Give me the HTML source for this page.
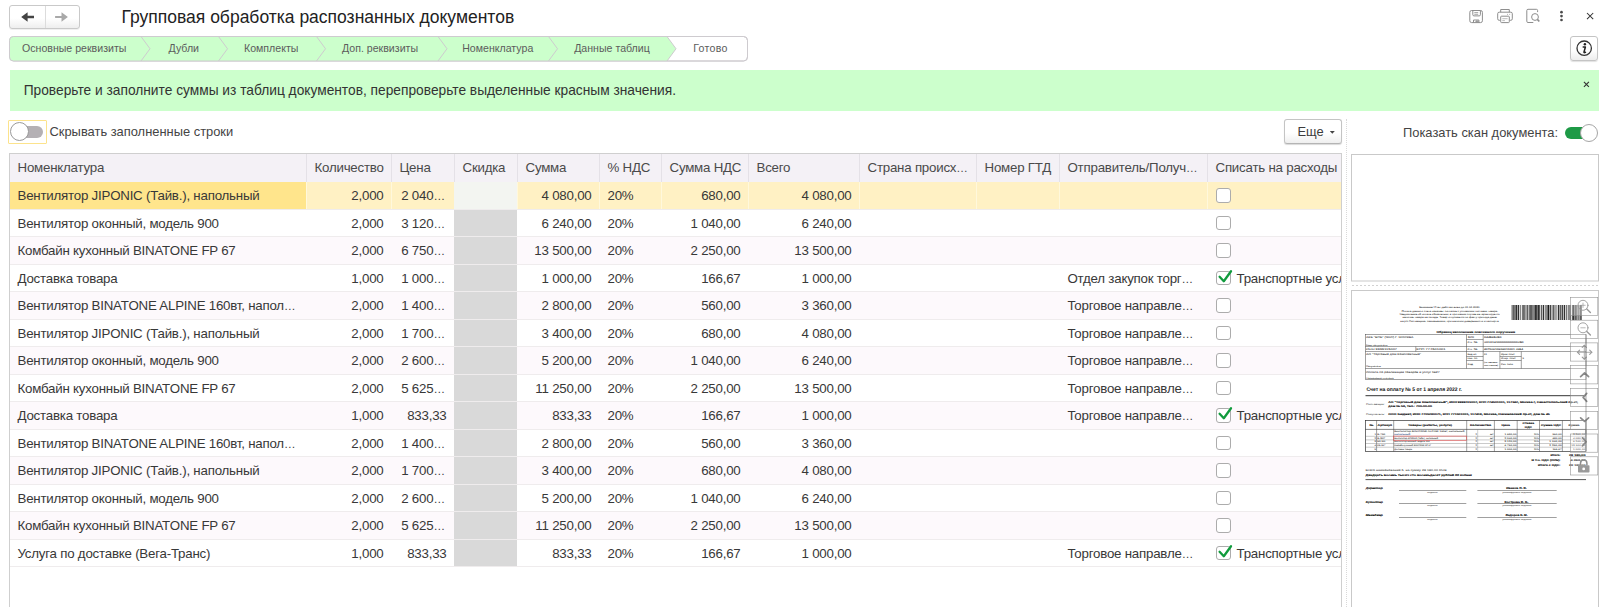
<!DOCTYPE html>
<html><head><meta charset="utf-8">
<style>
html,body{margin:0;padding:0;background:#fff;width:1600px;height:607px;overflow:hidden;position:relative}
body{font-family:"Liberation Sans",sans-serif;color:#333}
.abs{position:absolute}
.t{position:absolute;white-space:nowrap}
.cell{position:absolute;box-sizing:border-box;height:27.5px;line-height:27.5px;padding:0 7.5px 0 8.5px;font-size:13.3px;letter-spacing:-0.22px;white-space:nowrap;overflow:hidden;color:#383838}
.cell.r{text-align:right}
.el{font-size:11.6px;letter-spacing:0}
.cell.hd{color:#4a4a4a}
.bc{font-size:10.6px;line-height:20px;color:#5c5c5c}
.cb{position:absolute;width:14.5px;height:14.5px;box-sizing:border-box;border:1.3px solid #acacac;border-radius:3px;background:#fff}
</style></head><body>
<div class="abs" style="left:9px;top:5px;width:71px;height:23.5px;box-sizing:border-box;border:1px solid #c9c9c9;border-radius:3px;background:linear-gradient(#fff 55%,#eeeeee);box-shadow:0 1px 0 rgba(0,0,0,0.06)"></div>
<div class="abs" style="left:45px;top:6px;width:1px;height:21.5px;background:#dcdcdc"></div>
<svg class="abs" style="left:0;top:0" width="80" height="30" viewBox="0 0 80 30"><path d="M21.2 17 L27.6 12.2 L27.6 15.8 L34 15.8 L34 18.2 L27.6 18.2 L27.6 21.8 Z" fill="#444"/><path d="M67.9 17 L61.5 12.2 L61.5 15.9 L55.1 15.9 L55.1 18.1 L61.5 18.1 L61.5 21.8 Z" fill="#a9a9a9"/></svg>
<div class="t" style="left:121.5px;top:7px;font-size:17.5px;line-height:20px;color:#222">Групповая обработка распознанных документов</div>
<svg class="abs" style="left:1466px;top:6px" width="132" height="22" viewBox="1466 6 132 22">
<g fill="none" stroke="#8e8e8e" stroke-width="1">
<rect x="1469.8" y="10.5" width="12.6" height="12.1" rx="1.8"/>
<path d="M1472.8 10.5 v4.2 q0 1.2 1.2 1.2 h5.2 q1.2 0 1.2-1.2 v-4.2"/>
<path d="M1474.3 12.6 h3.9 M1474.3 14.3 h3.9" stroke-width="0.8"/>
<path d="M1473.5 22.6 v-2.6 h5.4 v2.6"/>
<path d="M1476.5 20.3 v2.2 M1477.7 20.3 v2.2 M1475.2 21.6 h3.5" stroke-width="0.7"/>
</g>
<g fill="none" stroke="#8e8e8e" stroke-width="1">
<path d="M1500.7 12.2 v-2.7 h8.6 v2.7"/>
<path d="M1500.2 20.3 h-1 q-1.5 0-1.5-1.5 v-5.1 q0-1.5 1.5-1.5 h11.6 q1.5 0 1.5 1.5 v5.1 q0 1.5-1.5 1.5 h-1"/>
<rect x="1500.7" y="16.2" width="8.6" height="6.4" rx="0.8"/>
<path d="M1502.3 18.7 h5.3 M1502.3 20.6 h2.6" stroke-width="0.6"/>
<path d="M1507 14.4 h0.8 M1509.3 14.4 h0.8" stroke-width="0.8"/>
</g>
<g fill="none" stroke="#8e8e8e" stroke-width="1">
<path d="M1533.3 22.5 h-5.3 q-1.2 0-1.2-1.2 v-10.8 q0-1.2 1.2-1.2 h8.4 q1.2 0 1.2 1.2 v1.6"/>
<circle cx="1535" cy="17" r="3.4"/>
<path d="M1537.4 19.4 l1.9 2.1" stroke-width="1.6"/>
</g>
<g fill="#4a4a4a"><circle cx="1561.5" cy="12.2" r="1.35"/><circle cx="1561.5" cy="16.1" r="1.35"/><circle cx="1561.5" cy="20" r="1.35"/></g>
<path d="M1587 13 l6.2 6.2 M1593.2 13 l-6.2 6.2" stroke="#333" stroke-width="1.05"/>
</svg>
<svg class="abs" style="left:0;top:0" width="760" height="70" viewBox="0 0 760 70">
<path d="M13.5 36.5 L743.5 36.5 Q747.5 36.5 747.5 40.5 L747.5 57 Q747.5 61 743.5 61 L13.5 61 Q9.5 61 9.5 57 L9.5 40.5 Q9.5 36.5 13.5 36.5 Z" fill="#fff" stroke="#cecbcf" stroke-width="1"/>
<path d="M13.5 36.5 L667 36.5 L676 48.75 L667 61 L13.5 61 Q9.5 61 9.5 57 L9.5 40.5 Q9.5 36.5 13.5 36.5 Z" fill="#ccffcc"/>
<path d="M13.5 36.5 L743.5 36.5 Q747.5 36.5 747.5 40.5 L747.5 57 Q747.5 61 743.5 61 L13.5 61 Q9.5 61 9.5 57 L9.5 40.5 Q9.5 36.5 13.5 36.5 Z" fill="none" stroke="#cecbcf" stroke-width="1"/>
<path d="M141 36.5 L150 48.75 L141 61 M218.5 36.5 L227.5 48.75 L218.5 61 M316.5 36.5 L325.5 48.75 L316.5 61 M438 36.5 L447 48.75 L438 61 M548.5 36.5 L557.5 48.75 L548.5 61 M667 36.5 L676 48.75 L667 61" fill="none" stroke="#cecbcf" stroke-width="1"/>
</svg>
<div class="t bc" style="left:22px;top:38px;">Основные реквизиты</div>
<div class="t bc" style="left:168.5px;top:38px;">Дубли</div>
<div class="t bc" style="left:244px;top:38px;">Комплекты</div>
<div class="t bc" style="left:342px;top:38px;">Доп. реквизиты</div>
<div class="t bc" style="left:462.2px;top:38px;">Номенклатура</div>
<div class="t bc" style="left:574.2px;top:38px;">Данные таблиц</div>
<div class="t bc" style="left:693.3px;top:38px;letter-spacing:0.3px">Готово</div>
<div class="abs" style="left:1570px;top:36px;width:28px;height:24.5px;box-sizing:border-box;border:1px solid #c4c4c4;border-radius:3px;background:linear-gradient(#fff 55%,#ededed);box-shadow:0 1px 1px rgba(0,0,0,0.12)"></div>
<svg class="abs" style="left:1574px;top:38.2px" width="20" height="20" viewBox="0 0 20 20"><circle cx="10.2" cy="10.2" r="7.2" fill="none" stroke="#333" stroke-width="1.3"/><circle cx="10.9" cy="6.3" r="1.2" fill="#222"/><path d="M9.2 9 h2.2 l-1.4 5 q-0.2 0.8 0.6 0.6 l0.9-0.4" fill="none" stroke="#222" stroke-width="1.5" stroke-linecap="round" stroke-linejoin="round"/></svg>
<div class="abs" style="left:9.5px;top:70px;width:1589px;height:41px;background:#ccffcc"></div>
<div class="t" style="left:23.7px;top:70px;font-size:13.76px;line-height:41px;color:#333">Проверьте и заполните суммы из таблиц документов, перепроверьте выделенные красным значения.</div>
<svg class="abs" style="left:1582px;top:80px" width="10" height="10" viewBox="0 0 10 10"><path d="M1.9 1.9 l5 5 M6.9 1.9 l-5 5" stroke="#333" stroke-width="1.1"/></svg>
<div class="abs" style="left:8px;top:120px;width:38.5px;height:23.5px;box-sizing:border-box;border:1px solid #fce38c;border-radius:1px"></div>
<div class="abs" style="left:14px;top:126px;width:29px;height:12px;border-radius:6px;background:#b4b0b4"></div>
<div class="abs" style="left:9.8px;top:122.3px;width:19px;height:19px;box-sizing:border-box;border:1.3px solid #9a9a9a;border-radius:50%;background:#fff"></div>
<div class="t" style="left:49.5px;top:122.3px;font-size:12.9px;line-height:20px;color:#444">Скрывать заполненные строки</div>
<div class="abs" style="left:1284px;top:119.3px;width:57.5px;height:24.4px;box-sizing:border-box;border:1px solid #c4c4c4;border-bottom-color:#b4b4b4;border-radius:3px;background:linear-gradient(#fff 55%,#efefef);box-shadow:0 1px 1px rgba(0,0,0,0.15)"></div>
<div class="t" style="left:1297.5px;top:122.2px;font-size:12.9px;line-height:20px;color:#3c3c3c">Еще</div>
<svg class="abs" style="left:1329.3px;top:130px" width="7" height="5" viewBox="0 0 7 5"><path d="M0.8 1 h5 l-2.5 2.8 z" fill="#444"/></svg>
<div class="abs" style="left:1346px;top:119px;width:0;height:488px;border-left:1px dotted #d9d9d9"></div>
<div class="t" style="left:1403px;top:123.4px;font-size:12.9px;line-height:20px;color:#444">Показать скан документа:</div>
<div class="abs" style="left:1565px;top:126.5px;width:26px;height:12.5px;border-radius:6.25px;background:#1e9a46"></div>
<div class="abs" style="left:1580px;top:123.5px;width:18.3px;height:18.3px;box-sizing:border-box;border:1.3px solid #a5a5a5;border-radius:50%;background:#fff"></div>
<div class="abs" style="left:9px;top:153px;width:1332px;height:29px;background:#f4f1f6;border-top:1px solid #cfcfcf;box-sizing:border-box"></div>
<div class="abs" style="left:306px;top:154px;width:1px;height:28px;background:#e4e1e7"></div>
<div class="abs" style="left:391px;top:154px;width:1px;height:28px;background:#e4e1e7"></div>
<div class="abs" style="left:454px;top:154px;width:1px;height:28px;background:#e4e1e7"></div>
<div class="abs" style="left:517px;top:154px;width:1px;height:28px;background:#e4e1e7"></div>
<div class="abs" style="left:599px;top:154px;width:1px;height:28px;background:#e4e1e7"></div>
<div class="abs" style="left:661px;top:154px;width:1px;height:28px;background:#e4e1e7"></div>
<div class="abs" style="left:748px;top:154px;width:1px;height:28px;background:#e4e1e7"></div>
<div class="abs" style="left:859px;top:154px;width:1px;height:28px;background:#e4e1e7"></div>
<div class="abs" style="left:976px;top:154px;width:1px;height:28px;background:#e4e1e7"></div>
<div class="abs" style="left:1059px;top:154px;width:1px;height:28px;background:#e4e1e7"></div>
<div class="abs" style="left:1207px;top:154px;width:1px;height:28px;background:#e4e1e7"></div>
<div class="cell hd" style="left:9px;top:154px;width:297px;height:28px;line-height:28px">Номенклатура</div>
<div class="cell hd" style="left:306px;top:154px;width:85px;height:28px;line-height:28px">Количество</div>
<div class="cell hd" style="left:391px;top:154px;width:63px;height:28px;line-height:28px">Цена</div>
<div class="cell hd" style="left:454px;top:154px;width:63px;height:28px;line-height:28px">Скидка</div>
<div class="cell hd" style="left:517px;top:154px;width:82px;height:28px;line-height:28px">Сумма</div>
<div class="cell hd" style="left:599px;top:154px;width:62px;height:28px;line-height:28px">% НДС</div>
<div class="cell hd" style="left:661px;top:154px;width:87px;height:28px;line-height:28px">Сумма НДС</div>
<div class="cell hd" style="left:748px;top:154px;width:111px;height:28px;line-height:28px">Всего</div>
<div class="cell hd" style="left:859px;top:154px;width:117px;height:28px;line-height:28px">Страна происх<span class="el">…</span></div>
<div class="cell hd" style="left:976px;top:154px;width:83px;height:28px;line-height:28px">Номер ГТД</div>
<div class="cell hd" style="left:1059px;top:154px;width:148px;height:28px;line-height:28px">Отправитель/Получ<span class="el">…</span></div>
<div class="cell hd" style="left:1207px;top:154px;width:134px;height:28px;line-height:28px">Списать на расходы</div>
<div class="abs" style="left:9px;top:182.0px;width:1332px;height:27.5px;background:#fff1c4"></div>
<div class="abs" style="left:9px;top:182.0px;width:297px;height:27.5px;background:#ffe58c"></div>
<div class="abs" style="left:454px;top:182.0px;width:63px;height:27.5px;background:#f3f5f1"></div>
<div class="abs" style="left:306px;top:182.0px;width:1px;height:27.5px;background:#fff8dc"></div>
<div class="abs" style="left:391px;top:182.0px;width:1px;height:27.5px;background:#fff8dc"></div>
<div class="abs" style="left:517px;top:182.0px;width:1px;height:27.5px;background:#fff8dc"></div>
<div class="abs" style="left:599px;top:182.0px;width:1px;height:27.5px;background:#fff8dc"></div>
<div class="abs" style="left:661px;top:182.0px;width:1px;height:27.5px;background:#fff8dc"></div>
<div class="abs" style="left:748px;top:182.0px;width:1px;height:27.5px;background:#fff8dc"></div>
<div class="abs" style="left:859px;top:182.0px;width:1px;height:27.5px;background:#fff8dc"></div>
<div class="abs" style="left:976px;top:182.0px;width:1px;height:27.5px;background:#fff8dc"></div>
<div class="abs" style="left:1059px;top:182.0px;width:1px;height:27.5px;background:#fff8dc"></div>
<div class="abs" style="left:1207px;top:182.0px;width:1px;height:27.5px;background:#fff8dc"></div>
<div class="abs" style="left:9px;top:208.5px;width:1332px;height:1px;background:#efeced"></div>
<div class="cell" style="left:9px;top:182.0px;width:297px">Вентилятор JIPONIC (Тайв.), напольный</div>
<div class="cell r" style="left:306px;top:182.0px;width:85px">2,000</div>
<div class="cell r" style="left:391px;top:182.0px;width:63px;padding-right:9px">2 040<span class="el">…</span></div>
<div class="cell r" style="left:517px;top:182.0px;width:82px">4 080,00</div>
<div class="cell" style="left:599px;top:182.0px;width:62px">20%</div>
<div class="cell r" style="left:661px;top:182.0px;width:87px">680,00</div>
<div class="cell r" style="left:748px;top:182.0px;width:111px">4 080,00</div>
<div class="cb" style="left:1216px;top:188.4px"></div>
<div class="abs" style="left:9px;top:209.5px;width:1332px;height:27.5px;background:#ffffff"></div>
<div class="abs" style="left:454px;top:209.5px;width:63px;height:27.5px;background:#d9d9d9"></div>
<div class="abs" style="left:9px;top:236.0px;width:1332px;height:1px;background:#efeced"></div>
<div class="cell" style="left:9px;top:209.5px;width:297px">Вентилятор оконный, модель 900</div>
<div class="cell r" style="left:306px;top:209.5px;width:85px">2,000</div>
<div class="cell r" style="left:391px;top:209.5px;width:63px;padding-right:9px">3 120<span class="el">…</span></div>
<div class="cell r" style="left:517px;top:209.5px;width:82px">6 240,00</div>
<div class="cell" style="left:599px;top:209.5px;width:62px">20%</div>
<div class="cell r" style="left:661px;top:209.5px;width:87px">1 040,00</div>
<div class="cell r" style="left:748px;top:209.5px;width:111px">6 240,00</div>
<div class="cb" style="left:1216px;top:215.9px"></div>
<div class="abs" style="left:9px;top:237.0px;width:1332px;height:27.5px;background:#fdf9fc"></div>
<div class="abs" style="left:454px;top:237.0px;width:63px;height:27.5px;background:#d9d9d9"></div>
<div class="abs" style="left:9px;top:263.5px;width:1332px;height:1px;background:#efeced"></div>
<div class="cell" style="left:9px;top:237.0px;width:297px">Комбайн кухонный BINATONE FP 67</div>
<div class="cell r" style="left:306px;top:237.0px;width:85px">2,000</div>
<div class="cell r" style="left:391px;top:237.0px;width:63px;padding-right:9px">6 750<span class="el">…</span></div>
<div class="cell r" style="left:517px;top:237.0px;width:82px">13 500,00</div>
<div class="cell" style="left:599px;top:237.0px;width:62px">20%</div>
<div class="cell r" style="left:661px;top:237.0px;width:87px">2 250,00</div>
<div class="cell r" style="left:748px;top:237.0px;width:111px">13 500,00</div>
<div class="cb" style="left:1216px;top:243.4px"></div>
<div class="abs" style="left:9px;top:264.5px;width:1332px;height:27.5px;background:#ffffff"></div>
<div class="abs" style="left:454px;top:264.5px;width:63px;height:27.5px;background:#d9d9d9"></div>
<div class="abs" style="left:9px;top:291.0px;width:1332px;height:1px;background:#efeced"></div>
<div class="cell" style="left:9px;top:264.5px;width:297px">Доставка товара</div>
<div class="cell r" style="left:306px;top:264.5px;width:85px">1,000</div>
<div class="cell r" style="left:391px;top:264.5px;width:63px;padding-right:9px">1 000<span class="el">…</span></div>
<div class="cell r" style="left:517px;top:264.5px;width:82px">1 000,00</div>
<div class="cell" style="left:599px;top:264.5px;width:62px">20%</div>
<div class="cell r" style="left:661px;top:264.5px;width:87px">166,67</div>
<div class="cell r" style="left:748px;top:264.5px;width:111px">1 000,00</div>
<div class="cell" style="left:1059px;top:264.5px;width:148px">Отдел закупок торг<span class="el">…</span></div>
<div class="cb" style="left:1216px;top:270.9px"></div>
<svg class="abs" style="left:1216px;top:268.9px" width="18" height="18" viewBox="0 0 18 18"><path d="M3.6 7.8 L7.8 12.2 L15 2.3" fill="none" stroke="#119b3d" stroke-width="2.3" stroke-linecap="round" stroke-linejoin="round"/></svg>
<div class="cell" style="left:1228px;top:264.5px;width:113px">Транспортные услуги</div>
<div class="abs" style="left:9px;top:292.0px;width:1332px;height:27.5px;background:#fdf9fc"></div>
<div class="abs" style="left:454px;top:292.0px;width:63px;height:27.5px;background:#d9d9d9"></div>
<div class="abs" style="left:9px;top:318.5px;width:1332px;height:1px;background:#efeced"></div>
<div class="cell" style="left:9px;top:292.0px;width:297px">Вентилятор BINATONE ALPINE 160вт, напол<span class="el">…</span></div>
<div class="cell r" style="left:306px;top:292.0px;width:85px">2,000</div>
<div class="cell r" style="left:391px;top:292.0px;width:63px;padding-right:9px">1 400<span class="el">…</span></div>
<div class="cell r" style="left:517px;top:292.0px;width:82px">2 800,00</div>
<div class="cell" style="left:599px;top:292.0px;width:62px">20%</div>
<div class="cell r" style="left:661px;top:292.0px;width:87px">560,00</div>
<div class="cell r" style="left:748px;top:292.0px;width:111px">3 360,00</div>
<div class="cell" style="left:1059px;top:292.0px;width:148px">Торговое направле<span class="el">…</span></div>
<div class="cb" style="left:1216px;top:298.4px"></div>
<div class="abs" style="left:9px;top:319.5px;width:1332px;height:27.5px;background:#ffffff"></div>
<div class="abs" style="left:454px;top:319.5px;width:63px;height:27.5px;background:#d9d9d9"></div>
<div class="abs" style="left:9px;top:346.0px;width:1332px;height:1px;background:#efeced"></div>
<div class="cell" style="left:9px;top:319.5px;width:297px">Вентилятор JIPONIC (Тайв.), напольный</div>
<div class="cell r" style="left:306px;top:319.5px;width:85px">2,000</div>
<div class="cell r" style="left:391px;top:319.5px;width:63px;padding-right:9px">1 700<span class="el">…</span></div>
<div class="cell r" style="left:517px;top:319.5px;width:82px">3 400,00</div>
<div class="cell" style="left:599px;top:319.5px;width:62px">20%</div>
<div class="cell r" style="left:661px;top:319.5px;width:87px">680,00</div>
<div class="cell r" style="left:748px;top:319.5px;width:111px">4 080,00</div>
<div class="cell" style="left:1059px;top:319.5px;width:148px">Торговое направле<span class="el">…</span></div>
<div class="cb" style="left:1216px;top:325.9px"></div>
<div class="abs" style="left:9px;top:347.0px;width:1332px;height:27.5px;background:#fdf9fc"></div>
<div class="abs" style="left:454px;top:347.0px;width:63px;height:27.5px;background:#d9d9d9"></div>
<div class="abs" style="left:9px;top:373.5px;width:1332px;height:1px;background:#efeced"></div>
<div class="cell" style="left:9px;top:347.0px;width:297px">Вентилятор оконный, модель 900</div>
<div class="cell r" style="left:306px;top:347.0px;width:85px">2,000</div>
<div class="cell r" style="left:391px;top:347.0px;width:63px;padding-right:9px">2 600<span class="el">…</span></div>
<div class="cell r" style="left:517px;top:347.0px;width:82px">5 200,00</div>
<div class="cell" style="left:599px;top:347.0px;width:62px">20%</div>
<div class="cell r" style="left:661px;top:347.0px;width:87px">1 040,00</div>
<div class="cell r" style="left:748px;top:347.0px;width:111px">6 240,00</div>
<div class="cell" style="left:1059px;top:347.0px;width:148px">Торговое направле<span class="el">…</span></div>
<div class="cb" style="left:1216px;top:353.4px"></div>
<div class="abs" style="left:9px;top:374.5px;width:1332px;height:27.5px;background:#ffffff"></div>
<div class="abs" style="left:454px;top:374.5px;width:63px;height:27.5px;background:#d9d9d9"></div>
<div class="abs" style="left:9px;top:401.0px;width:1332px;height:1px;background:#efeced"></div>
<div class="cell" style="left:9px;top:374.5px;width:297px">Комбайн кухонный BINATONE FP 67</div>
<div class="cell r" style="left:306px;top:374.5px;width:85px">2,000</div>
<div class="cell r" style="left:391px;top:374.5px;width:63px;padding-right:9px">5 625<span class="el">…</span></div>
<div class="cell r" style="left:517px;top:374.5px;width:82px">11 250,00</div>
<div class="cell" style="left:599px;top:374.5px;width:62px">20%</div>
<div class="cell r" style="left:661px;top:374.5px;width:87px">2 250,00</div>
<div class="cell r" style="left:748px;top:374.5px;width:111px">13 500,00</div>
<div class="cell" style="left:1059px;top:374.5px;width:148px">Торговое направле<span class="el">…</span></div>
<div class="cb" style="left:1216px;top:380.9px"></div>
<div class="abs" style="left:9px;top:402.0px;width:1332px;height:27.5px;background:#fdf9fc"></div>
<div class="abs" style="left:454px;top:402.0px;width:63px;height:27.5px;background:#d9d9d9"></div>
<div class="abs" style="left:9px;top:428.5px;width:1332px;height:1px;background:#efeced"></div>
<div class="cell" style="left:9px;top:402.0px;width:297px">Доставка товара</div>
<div class="cell r" style="left:306px;top:402.0px;width:85px">1,000</div>
<div class="cell r" style="left:391px;top:402.0px;width:63px;">833,33</div>
<div class="cell r" style="left:517px;top:402.0px;width:82px">833,33</div>
<div class="cell" style="left:599px;top:402.0px;width:62px">20%</div>
<div class="cell r" style="left:661px;top:402.0px;width:87px">166,67</div>
<div class="cell r" style="left:748px;top:402.0px;width:111px">1 000,00</div>
<div class="cell" style="left:1059px;top:402.0px;width:148px">Торговое направле<span class="el">…</span></div>
<div class="cb" style="left:1216px;top:408.4px"></div>
<svg class="abs" style="left:1216px;top:406.4px" width="18" height="18" viewBox="0 0 18 18"><path d="M3.6 7.8 L7.8 12.2 L15 2.3" fill="none" stroke="#119b3d" stroke-width="2.3" stroke-linecap="round" stroke-linejoin="round"/></svg>
<div class="cell" style="left:1228px;top:402.0px;width:113px">Транспортные услуги</div>
<div class="abs" style="left:9px;top:429.5px;width:1332px;height:27.5px;background:#ffffff"></div>
<div class="abs" style="left:454px;top:429.5px;width:63px;height:27.5px;background:#d9d9d9"></div>
<div class="abs" style="left:9px;top:456.0px;width:1332px;height:1px;background:#efeced"></div>
<div class="cell" style="left:9px;top:429.5px;width:297px">Вентилятор BINATONE ALPINE 160вт, напол<span class="el">…</span></div>
<div class="cell r" style="left:306px;top:429.5px;width:85px">2,000</div>
<div class="cell r" style="left:391px;top:429.5px;width:63px;padding-right:9px">1 400<span class="el">…</span></div>
<div class="cell r" style="left:517px;top:429.5px;width:82px">2 800,00</div>
<div class="cell" style="left:599px;top:429.5px;width:62px">20%</div>
<div class="cell r" style="left:661px;top:429.5px;width:87px">560,00</div>
<div class="cell r" style="left:748px;top:429.5px;width:111px">3 360,00</div>
<div class="cb" style="left:1216px;top:435.9px"></div>
<div class="abs" style="left:9px;top:457.0px;width:1332px;height:27.5px;background:#fdf9fc"></div>
<div class="abs" style="left:454px;top:457.0px;width:63px;height:27.5px;background:#d9d9d9"></div>
<div class="abs" style="left:9px;top:483.5px;width:1332px;height:1px;background:#efeced"></div>
<div class="cell" style="left:9px;top:457.0px;width:297px">Вентилятор JIPONIC (Тайв.), напольный</div>
<div class="cell r" style="left:306px;top:457.0px;width:85px">2,000</div>
<div class="cell r" style="left:391px;top:457.0px;width:63px;padding-right:9px">1 700<span class="el">…</span></div>
<div class="cell r" style="left:517px;top:457.0px;width:82px">3 400,00</div>
<div class="cell" style="left:599px;top:457.0px;width:62px">20%</div>
<div class="cell r" style="left:661px;top:457.0px;width:87px">680,00</div>
<div class="cell r" style="left:748px;top:457.0px;width:111px">4 080,00</div>
<div class="cb" style="left:1216px;top:463.4px"></div>
<div class="abs" style="left:9px;top:484.5px;width:1332px;height:27.5px;background:#ffffff"></div>
<div class="abs" style="left:454px;top:484.5px;width:63px;height:27.5px;background:#d9d9d9"></div>
<div class="abs" style="left:9px;top:511.0px;width:1332px;height:1px;background:#efeced"></div>
<div class="cell" style="left:9px;top:484.5px;width:297px">Вентилятор оконный, модель 900</div>
<div class="cell r" style="left:306px;top:484.5px;width:85px">2,000</div>
<div class="cell r" style="left:391px;top:484.5px;width:63px;padding-right:9px">2 600<span class="el">…</span></div>
<div class="cell r" style="left:517px;top:484.5px;width:82px">5 200,00</div>
<div class="cell" style="left:599px;top:484.5px;width:62px">20%</div>
<div class="cell r" style="left:661px;top:484.5px;width:87px">1 040,00</div>
<div class="cell r" style="left:748px;top:484.5px;width:111px">6 240,00</div>
<div class="cb" style="left:1216px;top:490.9px"></div>
<div class="abs" style="left:9px;top:512.0px;width:1332px;height:27.5px;background:#fdf9fc"></div>
<div class="abs" style="left:454px;top:512.0px;width:63px;height:27.5px;background:#d9d9d9"></div>
<div class="abs" style="left:9px;top:538.5px;width:1332px;height:1px;background:#efeced"></div>
<div class="cell" style="left:9px;top:512.0px;width:297px">Комбайн кухонный BINATONE FP 67</div>
<div class="cell r" style="left:306px;top:512.0px;width:85px">2,000</div>
<div class="cell r" style="left:391px;top:512.0px;width:63px;padding-right:9px">5 625<span class="el">…</span></div>
<div class="cell r" style="left:517px;top:512.0px;width:82px">11 250,00</div>
<div class="cell" style="left:599px;top:512.0px;width:62px">20%</div>
<div class="cell r" style="left:661px;top:512.0px;width:87px">2 250,00</div>
<div class="cell r" style="left:748px;top:512.0px;width:111px">13 500,00</div>
<div class="cb" style="left:1216px;top:518.4px"></div>
<div class="abs" style="left:9px;top:539.5px;width:1332px;height:27.5px;background:#ffffff"></div>
<div class="abs" style="left:454px;top:539.5px;width:63px;height:27.5px;background:#d9d9d9"></div>
<div class="abs" style="left:9px;top:566.0px;width:1332px;height:1px;background:#efeced"></div>
<div class="cell" style="left:9px;top:539.5px;width:297px">Услуга по доставке (Вега-Транс)</div>
<div class="cell r" style="left:306px;top:539.5px;width:85px">1,000</div>
<div class="cell r" style="left:391px;top:539.5px;width:63px;">833,33</div>
<div class="cell r" style="left:517px;top:539.5px;width:82px">833,33</div>
<div class="cell" style="left:599px;top:539.5px;width:62px">20%</div>
<div class="cell r" style="left:661px;top:539.5px;width:87px">166,67</div>
<div class="cell r" style="left:748px;top:539.5px;width:111px">1 000,00</div>
<div class="cell" style="left:1059px;top:539.5px;width:148px">Торговое направле<span class="el">…</span></div>
<div class="cb" style="left:1216px;top:545.9px"></div>
<svg class="abs" style="left:1216px;top:543.9px" width="18" height="18" viewBox="0 0 18 18"><path d="M3.6 7.8 L7.8 12.2 L15 2.3" fill="none" stroke="#119b3d" stroke-width="2.3" stroke-linecap="round" stroke-linejoin="round"/></svg>
<div class="cell" style="left:1228px;top:539.5px;width:113px">Транспортные услуги</div>
<div class="abs" style="left:9px;top:153px;width:1px;height:454px;background:#cfcfcf"></div>
<div class="abs" style="left:1341px;top:153px;width:1px;height:454px;background:#cfcfcf"></div>
<svg class="abs" style="left:1340px;top:140px" width="260" height="467" viewBox="1340 140 260 467" font-family="Liberation Sans" fill="#333" text-rendering="geometricPrecision">
<rect x="1351.5" y="154.5" width="247" height="126.5" fill="#fff" stroke="#c9c9c9" stroke-width="1"/>
<path d="M1352 285.5 H1598" stroke="#d2d2d2" stroke-width="1" stroke-dasharray="2 2"/>
<rect x="1351.5" y="290.5" width="247" height="330" fill="#fff" stroke="#c9c9c9" stroke-width="1"/>
<text x="1419.2" y="308.40" font-size="2.5" textLength="61" lengthAdjust="spacingAndGlyphs" stroke="#333" stroke-width="0.04">Внимание! Счет действителен до 01.04.2020.</text>
<text x="1401.5" y="311.60" font-size="2.5" textLength="96.5" lengthAdjust="spacingAndGlyphs" stroke="#333" stroke-width="0.04">Оплата данного счета означает согласие с условиями поставки товара.</text>
<text x="1399.5" y="315.00" font-size="2.5" textLength="100" lengthAdjust="spacingAndGlyphs" stroke="#333" stroke-width="0.04">Уведомление об оплате обязательно, в противном случае не гарантируется</text>
<text x="1402.4" y="318.30" font-size="2.5" textLength="95" lengthAdjust="spacingAndGlyphs" stroke="#333" stroke-width="0.04">наличие товара на складе. Товар отпускается по факту прихода денег</text>
<text x="1400.3" y="321.80" font-size="2.5" textLength="99" lengthAdjust="spacingAndGlyphs" stroke="#333" stroke-width="0.04">на р/с Поставщика, самовывозом, при наличии доверенности и паспорта.</text>
<rect x="1511.70" y="305" width="0.7" height="15" fill="#1a1a1a"/><rect x="1512.80" y="305" width="0.9" height="15" fill="#1a1a1a"/><rect x="1514.00" y="305" width="0.4" height="15" fill="#1a1a1a"/><rect x="1514.70" y="305" width="0.7" height="15" fill="#1a1a1a"/><rect x="1515.70" y="305" width="1.2" height="15" fill="#1a1a1a"/><rect x="1517.30" y="305" width="0.4" height="15" fill="#1a1a1a"/><rect x="1518.00" y="305" width="0.9" height="15" fill="#1a1a1a"/><rect x="1519.80" y="305" width="0.4" height="15" fill="#1a1a1a"/><rect x="1520.60" y="305" width="0.4" height="15" fill="#1a1a1a"/><rect x="1521.90" y="305" width="0.4" height="15" fill="#1a1a1a"/><rect x="1522.60" y="305" width="0.5" height="15" fill="#1a1a1a"/><rect x="1523.40" y="305" width="1.2" height="15" fill="#1a1a1a"/><rect x="1525.50" y="305" width="0.4" height="15" fill="#1a1a1a"/><rect x="1526.30" y="305" width="0.4" height="15" fill="#1a1a1a"/><rect x="1527.10" y="305" width="0.7" height="15" fill="#1a1a1a"/><rect x="1528.70" y="305" width="0.5" height="15" fill="#1a1a1a"/><rect x="1529.50" y="305" width="1.2" height="15" fill="#1a1a1a"/><rect x="1531.30" y="305" width="1.2" height="15" fill="#1a1a1a"/><rect x="1532.90" y="305" width="0.4" height="15" fill="#1a1a1a"/><rect x="1533.70" y="305" width="0.7" height="15" fill="#1a1a1a"/><rect x="1534.70" y="305" width="1.2" height="15" fill="#1a1a1a"/><rect x="1536.20" y="305" width="1.2" height="15" fill="#1a1a1a"/><rect x="1537.70" y="305" width="1.2" height="15" fill="#1a1a1a"/><rect x="1539.30" y="305" width="0.9" height="15" fill="#1a1a1a"/><rect x="1541.10" y="305" width="0.7" height="15" fill="#1a1a1a"/><rect x="1542.70" y="305" width="1.2" height="15" fill="#1a1a1a"/><rect x="1544.80" y="305" width="0.7" height="15" fill="#1a1a1a"/><rect x="1546.10" y="305" width="0.5" height="15" fill="#1a1a1a"/><rect x="1547.00" y="305" width="0.5" height="15" fill="#1a1a1a"/><rect x="1547.80" y="305" width="1.2" height="15" fill="#1a1a1a"/><rect x="1549.60" y="305" width="1.2" height="15" fill="#1a1a1a"/><rect x="1551.70" y="305" width="0.7" height="15" fill="#1a1a1a"/><rect x="1553.30" y="305" width="0.7" height="15" fill="#1a1a1a"/><rect x="1554.30" y="305" width="0.4" height="15" fill="#1a1a1a"/><rect x="1555.60" y="305" width="0.5" height="15" fill="#1a1a1a"/><rect x="1556.70" y="305" width="0.5" height="15" fill="#1a1a1a"/><rect x="1558.10" y="305" width="0.9" height="15" fill="#1a1a1a"/><rect x="1559.30" y="305" width="0.4" height="15" fill="#1a1a1a"/><rect x="1560.30" y="305" width="0.7" height="15" fill="#1a1a1a"/><rect x="1561.60" y="305" width="1.2" height="15" fill="#1a1a1a"/><rect x="1563.70" y="305" width="1.2" height="15" fill="#1a1a1a"/><rect x="1565.80" y="305" width="0.4" height="15" fill="#1a1a1a"/><rect x="1566.50" y="305" width="0.7" height="15" fill="#1a1a1a"/><rect x="1568.10" y="305" width="0.4" height="15" fill="#1a1a1a"/><rect x="1568.80" y="305" width="0.7" height="15" fill="#1a1a1a"/><rect x="1570.40" y="305" width="0.7" height="15" fill="#1a1a1a"/><rect x="1572.00" y="305" width="0.7" height="15" fill="#1a1a1a"/><rect x="1573.00" y="305" width="0.9" height="15" fill="#1a1a1a"/><rect x="1574.50" y="305" width="0.5" height="15" fill="#1a1a1a"/><rect x="1575.30" y="305" width="0.9" height="15" fill="#1a1a1a"/><rect x="1576.50" y="305" width="0.5" height="15" fill="#1a1a1a"/><rect x="1577.60" y="305" width="0.5" height="15" fill="#1a1a1a"/><rect x="1578.50" y="305" width="0.9" height="15" fill="#1a1a1a"/><rect x="1580.30" y="305" width="0.9" height="15" fill="#1a1a1a"/><rect x="1581.50" y="305" width="0.5" height="15" fill="#1a1a1a"/>
<text x="1436.5" y="333.24" font-size="2.9" textLength="78.5" lengthAdjust="spacingAndGlyphs" font-weight="bold" fill="#111" stroke="#111" stroke-width="0.12">Образец заполнения платежного поручения</text>
<rect x="1365.5" y="334.5" width="220.5" height="45" fill="none" stroke="#444" stroke-width="0.5"/>
<path d="M1365.35 346.5 L1585.95 346.5" stroke="#444" stroke-width="0.5"/>
<path d="M1365.35 351.5 L1585.95 351.5" stroke="#444" stroke-width="0.5"/>
<path d="M1365.35 368.5 L1585.95 368.5" stroke="#444" stroke-width="0.5"/>
<path d="M1466.5 334.45 L1466.5 368.5" stroke="#444" stroke-width="0.5"/>
<path d="M1483.2 334.45 L1483.2 368.5" stroke="#444" stroke-width="0.5"/>
<path d="M1499.9 351.5 L1499.9 368.5" stroke="#444" stroke-width="0.5"/>
<path d="M1521.3 351.5 L1521.3 368.5" stroke="#444" stroke-width="0.5"/>
<path d="M1415.8 346.5 L1415.8 351.5" stroke="#444" stroke-width="0.5"/>
<path d="M1466.5 339.5 L1483.2 339.5" stroke="#444" stroke-width="0.5"/>
<path d="M1466.5 356.5 L1483.2 356.5" stroke="#444" stroke-width="0.5"/>
<path d="M1466.5 360.5 L1483.2 360.5" stroke="#444" stroke-width="0.5"/>
<path d="M1499.9 356.5 L1521.3 356.5" stroke="#444" stroke-width="0.5"/>
<path d="M1499.9 360.5 L1521.3 360.5" stroke="#444" stroke-width="0.5"/>
<text x="1366" y="337.74" font-size="2.6" textLength="47.5" lengthAdjust="spacingAndGlyphs" stroke="#333" stroke-width="0.04">АКБ "ВПБ" (ЗАО) Г. МОСКВА</text>
<text x="1366" y="345.76" font-size="2.1" textLength="21.5" lengthAdjust="spacingAndGlyphs" stroke="#333" stroke-width="0.04">Банк получателя</text>
<text x="1366" y="349.94" font-size="2.6" textLength="31" lengthAdjust="spacingAndGlyphs" stroke="#333" stroke-width="0.04">ИНН    9999115007</text>
<text x="1416.3" y="349.94" font-size="2.6" textLength="29.3" lengthAdjust="spacingAndGlyphs" stroke="#333" stroke-width="0.04">КПП    774501001</text>
<text x="1366" y="355.04" font-size="2.6" textLength="55" lengthAdjust="spacingAndGlyphs" stroke="#333" stroke-width="0.04">АО "Торговый дом Комплексный"</text>
<text x="1366" y="367.06" font-size="2.1" textLength="15" lengthAdjust="spacingAndGlyphs" stroke="#333" stroke-width="0.04">Получатель</text>
<text x="1366" y="373.04" font-size="2.6" textLength="73.8" lengthAdjust="spacingAndGlyphs" stroke="#333" stroke-width="0.04">Оплата по реализации товаров и услуг №27</text>
<text x="1366" y="378.56" font-size="2.1" textLength="27.6" lengthAdjust="spacingAndGlyphs" stroke="#333" stroke-width="0.04">Назначение платежа</text>
<text x="1468" y="337.66" font-size="2.4" textLength="6" lengthAdjust="spacingAndGlyphs" stroke="#333" stroke-width="0.04">БИК</text>
<text x="1484" y="337.66" font-size="2.4" textLength="17.5" lengthAdjust="spacingAndGlyphs" stroke="#333" stroke-width="0.04">044585250</text>
<text x="1467.5" y="342.66" font-size="2.4" textLength="10" lengthAdjust="spacingAndGlyphs" stroke="#333" stroke-width="0.04">Сч. №</text>
<text x="1484" y="342.66" font-size="2.4" textLength="39.6" lengthAdjust="spacingAndGlyphs" stroke="#333" stroke-width="0.04">30101810000000000250</text>
<text x="1467.5" y="349.86" font-size="2.4" textLength="10" lengthAdjust="spacingAndGlyphs" stroke="#333" stroke-width="0.04">Сч. №</text>
<text x="1484" y="349.86" font-size="2.4" textLength="39" lengthAdjust="spacingAndGlyphs" stroke="#333" stroke-width="0.04">40702810808011001 3654</text>
<text x="1467.5" y="354.79" font-size="2.2" textLength="9.5" lengthAdjust="spacingAndGlyphs" stroke="#333" stroke-width="0.04">Вид оп.</text>
<text x="1484" y="354.79" font-size="2.2" textLength="3" lengthAdjust="spacingAndGlyphs" stroke="#333" stroke-width="0.04">01</text>
<text x="1501" y="354.79" font-size="2.2" textLength="14" lengthAdjust="spacingAndGlyphs" stroke="#333" stroke-width="0.04">Срок плат.</text>
<text x="1467.5" y="359.29" font-size="2.2" textLength="10.5" lengthAdjust="spacingAndGlyphs" stroke="#333" stroke-width="0.04">Наз. пл.</text>
<text x="1501" y="359.29" font-size="2.2" textLength="15" lengthAdjust="spacingAndGlyphs" stroke="#333" stroke-width="0.04">Очер. плат.</text>
<text x="1522.5" y="359.29" font-size="2.2" textLength="1.5" lengthAdjust="spacingAndGlyphs" stroke="#333" stroke-width="0.04">5</text>
<text x="1467.5" y="365.49" font-size="2.2" textLength="5.5" lengthAdjust="spacingAndGlyphs" stroke="#333" stroke-width="0.04">Код</text>
<text x="1484" y="363.22" font-size="2.0" textLength="14" lengthAdjust="spacingAndGlyphs" stroke="#333" stroke-width="0.04">(по назначе-</text>
<text x="1484" y="366.22" font-size="2.0" textLength="14" lengthAdjust="spacingAndGlyphs" stroke="#333" stroke-width="0.04">нию платежа)</text>
<text x="1501" y="365.49" font-size="2.2" textLength="12" lengthAdjust="spacingAndGlyphs" stroke="#333" stroke-width="0.04">Рез. поле</text>
<text x="1366.5" y="391.47" font-size="5.2" textLength="95.4" lengthAdjust="spacingAndGlyphs" font-weight="bold" fill="#111">Счет на оплату № 5 от 1 апреля 2022 г.</text>
<path d="M1365.5 395.7 L1586 395.7" stroke="#333" stroke-width="1.0"/>
<text x="1366" y="404.50" font-size="2.5" textLength="18.6" lengthAdjust="spacingAndGlyphs" fill="#555" stroke="#555" stroke-width="0.04">Поставщик:</text>
<text x="1388.3" y="402.94" font-size="2.6" textLength="189.6" lengthAdjust="spacingAndGlyphs" font-weight="bold" fill="#111" stroke="#111" stroke-width="0.12">АО "Торговый дом Комплексный", ИНН 9999115007, КПП 774501001, 117342, Москва г, Севастопольский пр-кт,</text>
<text x="1388.3" y="406.84" font-size="2.6" textLength="43.7" lengthAdjust="spacingAndGlyphs" font-weight="bold" fill="#111" stroke="#111" stroke-width="0.12">дом № 56, тел.: 700-00-00</text>
<text x="1366" y="414.90" font-size="2.5" textLength="19" lengthAdjust="spacingAndGlyphs" fill="#555" stroke="#555" stroke-width="0.04">Покупатель:</text>
<text x="1388.3" y="414.94" font-size="2.6" textLength="161.5" lengthAdjust="spacingAndGlyphs" font-weight="bold" fill="#111" stroke="#111" stroke-width="0.12">ООО Бюджет, ИНН 7705260071, КПП 771501001, 117418, Москва, Нахимовский пр-кт, дом № 45</text>
<rect x="1365.35" y="420.4" width="220.6" height="31" fill="none" stroke="#333" stroke-width="0.7"/>
<path d="M1365.35 429.4 L1585.95 429.4" stroke="#333" stroke-width="0.6"/>
<path d="M1376.6 420.4 L1376.6 451.4" stroke="#444" stroke-width="0.5"/>
<path d="M1393.7 420.4 L1393.7 451.4" stroke="#444" stroke-width="0.5"/>
<path d="M1466.7 420.4 L1466.7 451.4" stroke="#444" stroke-width="0.5"/>
<path d="M1494.4 420.4 L1494.4 451.4" stroke="#444" stroke-width="0.5"/>
<path d="M1517.2 420.4 L1517.2 451.4" stroke="#444" stroke-width="0.5"/>
<path d="M1539.5 420.4 L1539.5 451.4" stroke="#444" stroke-width="0.5"/>
<path d="M1562.4 420.4 L1562.4 451.4" stroke="#444" stroke-width="0.5"/>
<path d="M1365.35 436.3 L1585.95 436.3" stroke="#666" stroke-width="0.35"/>
<path d="M1365.35 439.9 L1585.95 439.9" stroke="#666" stroke-width="0.35"/>
<path d="M1365.35 443.5 L1585.95 443.5" stroke="#666" stroke-width="0.35"/>
<path d="M1365.35 447.2 L1585.95 447.2" stroke="#666" stroke-width="0.35"/>
<path d="M1477.7 429.4 L1477.7 451.4" stroke="#777" stroke-width="0.35"/>
<text x="1371.5" y="425.50" font-size="2.5" textLength="4" lengthAdjust="spacingAndGlyphs" font-weight="bold" text-anchor="middle" fill="#111" stroke="#111" stroke-width="0.12">№</text>
<text x="1377.6" y="425.50" font-size="2.5" textLength="14.5" lengthAdjust="spacingAndGlyphs" font-weight="bold" fill="#111" stroke="#111" stroke-width="0.12">Артикул</text>
<text x="1430" y="425.50" font-size="2.5" textLength="44" lengthAdjust="spacingAndGlyphs" font-weight="bold" text-anchor="middle" fill="#111" stroke="#111" stroke-width="0.12">Товары (работы, услуги)</text>
<text x="1480.6" y="425.50" font-size="2.5" textLength="21" lengthAdjust="spacingAndGlyphs" font-weight="bold" text-anchor="middle" fill="#111" stroke="#111" stroke-width="0.12">Количество</text>
<text x="1505.8" y="425.50" font-size="2.5" textLength="8.5" lengthAdjust="spacingAndGlyphs" font-weight="bold" text-anchor="middle" fill="#111" stroke="#111" stroke-width="0.12">Цена</text>
<text x="1528.3" y="423.50" font-size="2.5" textLength="11.5" lengthAdjust="spacingAndGlyphs" font-weight="bold" text-anchor="middle" fill="#111" stroke="#111" stroke-width="0.12">Ставка</text>
<text x="1528.3" y="427.70" font-size="2.5" textLength="7" lengthAdjust="spacingAndGlyphs" font-weight="bold" text-anchor="middle" fill="#111" stroke="#111" stroke-width="0.12">НДС</text>
<text x="1551" y="425.50" font-size="2.5" textLength="20" lengthAdjust="spacingAndGlyphs" font-weight="bold" text-anchor="middle" fill="#111" stroke="#111" stroke-width="0.12">Сумма НДС</text>
<text x="1574" y="425.50" font-size="2.5" textLength="11" lengthAdjust="spacingAndGlyphs" font-weight="bold" text-anchor="middle" fill="#111" stroke="#111" stroke-width="0.12">Сумма</text>
<text x="1376" y="435.09" font-size="2.2" textLength="1.5" lengthAdjust="spacingAndGlyphs" text-anchor="end" stroke="#333" stroke-width="0.04">1</text>
<text x="1377.3" y="435.09" font-size="2.2" textLength="8" lengthAdjust="spacingAndGlyphs" stroke="#333" stroke-width="0.04">В-750</text>
<text x="1394.3" y="431.79" font-size="2.2" textLength="71" lengthAdjust="spacingAndGlyphs" stroke="#333" stroke-width="0.04">Вентилятор BINATONE ALPINE 160вт, напольный,</text>
<text x="1394.3" y="435.09" font-size="2.2" textLength="16" lengthAdjust="spacingAndGlyphs" fill="#2a4f8a" stroke="#2a4f8a" stroke-width="0.04">напольный</text>
<text x="1477" y="435.09" font-size="2.2" textLength="1.4" lengthAdjust="spacingAndGlyphs" text-anchor="end" stroke="#333" stroke-width="0.04">2</text>
<text x="1493.5" y="435.09" font-size="2.2" textLength="3.5" lengthAdjust="spacingAndGlyphs" text-anchor="end" stroke="#333" stroke-width="0.04">шт</text>
<text x="1516.5" y="435.09" font-size="2.2" textLength="12" lengthAdjust="spacingAndGlyphs" text-anchor="end" stroke="#333" stroke-width="0.04">1 680,00</text>
<text x="1538.8" y="435.09" font-size="2.2" textLength="4.8" lengthAdjust="spacingAndGlyphs" text-anchor="end" stroke="#333" stroke-width="0.04">20%</text>
<text x="1561.7" y="435.09" font-size="2.2" textLength="9.3" lengthAdjust="spacingAndGlyphs" text-anchor="end" stroke="#333" stroke-width="0.04">560,00</text>
<text x="1585.3" y="435.09" font-size="2.2" textLength="12.4" lengthAdjust="spacingAndGlyphs" text-anchor="end" stroke="#333" stroke-width="0.04">3 360,00</text>
<text x="1376" y="438.89" font-size="2.2" textLength="1.5" lengthAdjust="spacingAndGlyphs" text-anchor="end" stroke="#333" stroke-width="0.04">2</text>
<text x="1377.3" y="438.89" font-size="2.2" textLength="8" lengthAdjust="spacingAndGlyphs" stroke="#333" stroke-width="0.04">В-307</text>
<text x="1394.3" y="438.89" font-size="2.2" textLength="43.66" lengthAdjust="spacingAndGlyphs" stroke="#333" stroke-width="0.04">Вентилятор JIPONIC (Тайв.), напольный</text>
<text x="1477" y="438.89" font-size="2.2" textLength="1.4" lengthAdjust="spacingAndGlyphs" text-anchor="end" stroke="#333" stroke-width="0.04">2</text>
<text x="1493.5" y="438.89" font-size="2.2" textLength="3.5" lengthAdjust="spacingAndGlyphs" text-anchor="end" stroke="#333" stroke-width="0.04">шт</text>
<text x="1516.5" y="438.89" font-size="2.2" textLength="12" lengthAdjust="spacingAndGlyphs" text-anchor="end" stroke="#333" stroke-width="0.04">2 040,00</text>
<text x="1538.8" y="438.89" font-size="2.2" textLength="4.8" lengthAdjust="spacingAndGlyphs" text-anchor="end" stroke="#333" stroke-width="0.04">20%</text>
<text x="1561.7" y="438.89" font-size="2.2" textLength="9.3" lengthAdjust="spacingAndGlyphs" text-anchor="end" stroke="#333" stroke-width="0.04">680,00</text>
<text x="1585.3" y="438.89" font-size="2.2" textLength="12.4" lengthAdjust="spacingAndGlyphs" text-anchor="end" stroke="#333" stroke-width="0.04">4 080,00</text>
<text x="1376" y="442.49" font-size="2.2" textLength="1.5" lengthAdjust="spacingAndGlyphs" text-anchor="end" stroke="#333" stroke-width="0.04">3</text>
<text x="1377.3" y="442.49" font-size="2.2" textLength="8" lengthAdjust="spacingAndGlyphs" stroke="#333" stroke-width="0.04">ВО-900</text>
<text x="1394.3" y="442.49" font-size="2.2" textLength="35.4" lengthAdjust="spacingAndGlyphs" stroke="#333" stroke-width="0.04">Вентилятор оконный, модель 900</text>
<text x="1477" y="442.49" font-size="2.2" textLength="1.4" lengthAdjust="spacingAndGlyphs" text-anchor="end" stroke="#333" stroke-width="0.04">2</text>
<text x="1493.5" y="442.49" font-size="2.2" textLength="3.5" lengthAdjust="spacingAndGlyphs" text-anchor="end" stroke="#333" stroke-width="0.04">шт</text>
<text x="1516.5" y="442.49" font-size="2.2" textLength="12" lengthAdjust="spacingAndGlyphs" text-anchor="end" stroke="#333" stroke-width="0.04">3 120,00</text>
<text x="1538.8" y="442.49" font-size="2.2" textLength="4.8" lengthAdjust="spacingAndGlyphs" text-anchor="end" stroke="#333" stroke-width="0.04">20%</text>
<text x="1561.7" y="442.49" font-size="2.2" textLength="12.4" lengthAdjust="spacingAndGlyphs" text-anchor="end" stroke="#333" stroke-width="0.04">1 040,00</text>
<text x="1585.3" y="442.49" font-size="2.2" textLength="12.4" lengthAdjust="spacingAndGlyphs" text-anchor="end" stroke="#333" stroke-width="0.04">6 240,00</text>
<text x="1376" y="446.14" font-size="2.2" textLength="1.5" lengthAdjust="spacingAndGlyphs" text-anchor="end" stroke="#333" stroke-width="0.04">4</text>
<text x="1377.3" y="446.14" font-size="2.2" textLength="8" lengthAdjust="spacingAndGlyphs" stroke="#333" stroke-width="0.04">КВ-067</text>
<text x="1394.3" y="446.14" font-size="2.2" textLength="36.58" lengthAdjust="spacingAndGlyphs" stroke="#333" stroke-width="0.04">Комбайн кухонный BINATONE FP 67</text>
<text x="1477" y="446.14" font-size="2.2" textLength="1.4" lengthAdjust="spacingAndGlyphs" text-anchor="end" stroke="#333" stroke-width="0.04">2</text>
<text x="1493.5" y="446.14" font-size="2.2" textLength="3.5" lengthAdjust="spacingAndGlyphs" text-anchor="end" stroke="#333" stroke-width="0.04">шт</text>
<text x="1516.5" y="446.14" font-size="2.2" textLength="12" lengthAdjust="spacingAndGlyphs" text-anchor="end" stroke="#333" stroke-width="0.04">6 750,00</text>
<text x="1538.8" y="446.14" font-size="2.2" textLength="4.8" lengthAdjust="spacingAndGlyphs" text-anchor="end" stroke="#333" stroke-width="0.04">20%</text>
<text x="1561.7" y="446.14" font-size="2.2" textLength="12.4" lengthAdjust="spacingAndGlyphs" text-anchor="end" stroke="#333" stroke-width="0.04">2 250,00</text>
<text x="1585.3" y="446.14" font-size="2.2" textLength="13.950000000000001" lengthAdjust="spacingAndGlyphs" text-anchor="end" stroke="#333" stroke-width="0.04">13 500,00</text>
<text x="1376" y="450.09" font-size="2.2" textLength="1.5" lengthAdjust="spacingAndGlyphs" text-anchor="end" stroke="#333" stroke-width="0.04">5</text>
<text x="1394.3" y="450.09" font-size="2.2" textLength="17.7" lengthAdjust="spacingAndGlyphs" stroke="#333" stroke-width="0.04">Доставка товара</text>
<text x="1477" y="450.09" font-size="2.2" textLength="1.4" lengthAdjust="spacingAndGlyphs" text-anchor="end" stroke="#333" stroke-width="0.04">2</text>
<text x="1516.5" y="450.09" font-size="2.2" textLength="12" lengthAdjust="spacingAndGlyphs" text-anchor="end" stroke="#333" stroke-width="0.04">1 000,00</text>
<text x="1538.8" y="450.09" font-size="2.2" textLength="4.8" lengthAdjust="spacingAndGlyphs" text-anchor="end" stroke="#333" stroke-width="0.04">20%</text>
<text x="1561.7" y="450.09" font-size="2.2" textLength="9.3" lengthAdjust="spacingAndGlyphs" text-anchor="end" stroke="#333" stroke-width="0.04">166,67</text>
<text x="1585.3" y="450.09" font-size="2.2" textLength="12.4" lengthAdjust="spacingAndGlyphs" text-anchor="end" stroke="#333" stroke-width="0.04">1 000,00</text>
<rect x="1393.7" y="436.1" width="72.7" height="4.3" fill="none" stroke="#e05050" stroke-width="0.6"/>
<text x="1560.5" y="456.24" font-size="2.6" textLength="10" lengthAdjust="spacingAndGlyphs" font-weight="bold" text-anchor="end" fill="#111" stroke="#111" stroke-width="0.12">Итого:</text>
<text x="1560.5" y="461.14" font-size="2.6" textLength="29" lengthAdjust="spacingAndGlyphs" font-weight="bold" text-anchor="end" fill="#111" stroke="#111" stroke-width="0.12">В т.ч. НДС (20%):</text>
<text x="1560.5" y="465.94" font-size="2.6" textLength="22.5" lengthAdjust="spacingAndGlyphs" font-weight="bold" text-anchor="end" fill="#111" stroke="#111" stroke-width="0.12">Итого с НДС:</text>
<text x="1585.5" y="456.24" font-size="2.6" textLength="16.5" lengthAdjust="spacingAndGlyphs" font-weight="bold" text-anchor="end" fill="#111" stroke="#111" stroke-width="0.12">28 180,00</text>
<text x="1585.5" y="461.14" font-size="2.6" textLength="15" lengthAdjust="spacingAndGlyphs" font-weight="bold" text-anchor="end" fill="#111" stroke="#111" stroke-width="0.12">4 696,67</text>
<text x="1585.5" y="465.94" font-size="2.6" textLength="16.5" lengthAdjust="spacingAndGlyphs" font-weight="bold" text-anchor="end" fill="#111" stroke="#111" stroke-width="0.12">28 180,00</text>
<text x="1365.6" y="470.64" font-size="2.6" textLength="81" lengthAdjust="spacingAndGlyphs" fill="#444" stroke="#444" stroke-width="0.04">Всего наименований 5, на сумму 28 180,00 RUB</text>
<text x="1365.6" y="475.57" font-size="2.7" textLength="106.3" lengthAdjust="spacingAndGlyphs" font-weight="bold" fill="#111" stroke="#111" stroke-width="0.12">Двадцать восемь тысяч сто восемьдесят рублей 00 копеек</text>
<path d="M1365.5 479.6 L1586 479.6" stroke="#444" stroke-width="0.9"/>
<text x="1365.8" y="489.37" font-size="2.7" textLength="17" lengthAdjust="spacingAndGlyphs" font-weight="bold" font-style="italic" fill="#111" stroke="#111" stroke-width="0.12">Директор</text>
<path d="M1399 490.5 L1466.3 490.5" stroke="#777" stroke-width="0.7"/>
<path d="M1477.4 490.5 L1556.7 490.5" stroke="#777" stroke-width="0.7"/>
<text x="1432.5" y="493.45" font-size="1.8" textLength="10.5" lengthAdjust="spacingAndGlyphs" text-anchor="middle" fill="#555" stroke="#555" stroke-width="0.04">подпись</text>
<text x="1516.9" y="493.45" font-size="1.8" textLength="29" lengthAdjust="spacingAndGlyphs" text-anchor="middle" fill="#555" stroke="#555" stroke-width="0.04">расшифровка подписи</text>
<text x="1516.5" y="489.37" font-size="2.7" textLength="20.4" lengthAdjust="spacingAndGlyphs" font-weight="bold" text-anchor="middle" fill="#111" stroke="#111" stroke-width="0.12">Иванов О. В.</text>
<text x="1365.8" y="502.67" font-size="2.7" textLength="17" lengthAdjust="spacingAndGlyphs" font-weight="bold" font-style="italic" fill="#111" stroke="#111" stroke-width="0.12">Бухгалтер</text>
<path d="M1399 503.5 L1466.3 503.5" stroke="#777" stroke-width="0.7"/>
<path d="M1477.4 503.5 L1556.7 503.5" stroke="#777" stroke-width="0.7"/>
<text x="1432.5" y="506.45" font-size="1.8" textLength="10.5" lengthAdjust="spacingAndGlyphs" text-anchor="middle" fill="#555" stroke="#555" stroke-width="0.04">подпись</text>
<text x="1516.9" y="506.45" font-size="1.8" textLength="29" lengthAdjust="spacingAndGlyphs" text-anchor="middle" fill="#555" stroke="#555" stroke-width="0.04">расшифровка подписи</text>
<text x="1516.5" y="502.67" font-size="2.7" textLength="23.8" lengthAdjust="spacingAndGlyphs" font-weight="bold" text-anchor="middle" fill="#111" stroke="#111" stroke-width="0.12">Кострова В. Б.</text>
<text x="1365.8" y="516.17" font-size="2.7" textLength="17" lengthAdjust="spacingAndGlyphs" font-weight="bold" font-style="italic" fill="#111" stroke="#111" stroke-width="0.12">Менеджер</text>
<path d="M1399 517.5 L1466.3 517.5" stroke="#777" stroke-width="0.7"/>
<path d="M1477.4 517.5 L1556.7 517.5" stroke="#777" stroke-width="0.7"/>
<text x="1432.5" y="520.45" font-size="1.8" textLength="10.5" lengthAdjust="spacingAndGlyphs" text-anchor="middle" fill="#555" stroke="#555" stroke-width="0.04">подпись</text>
<text x="1516.9" y="520.45" font-size="1.8" textLength="29" lengthAdjust="spacingAndGlyphs" text-anchor="middle" fill="#555" stroke="#555" stroke-width="0.04">расшифровка подписи</text>
<text x="1516.5" y="516.17" font-size="2.7" textLength="22.099999999999998" lengthAdjust="spacingAndGlyphs" font-weight="bold" text-anchor="middle" fill="#111" stroke="#111" stroke-width="0.12">Федоров Б. М.</text>
<rect x="1570.5" y="297.4" width="27.3" height="18.2" fill="rgba(255,255,255,0.3)" stroke="#8c8c8c" stroke-width="0.55"/>
<rect x="1570.5" y="320.2" width="27.3" height="18.2" fill="rgba(255,255,255,0.3)" stroke="#8c8c8c" stroke-width="0.55"/>
<rect x="1570.5" y="342.9" width="27.3" height="18.2" fill="rgba(255,255,255,0.3)" stroke="#8c8c8c" stroke-width="0.55"/>
<rect x="1570.5" y="365.7" width="27.3" height="18.2" fill="rgba(255,255,255,0.3)" stroke="#8c8c8c" stroke-width="0.55"/>
<rect x="1570.5" y="388.4" width="27.3" height="18.2" fill="rgba(255,255,255,0.3)" stroke="#8c8c8c" stroke-width="0.55"/>
<rect x="1570.5" y="411.3" width="27.3" height="18.2" fill="rgba(255,255,255,0.3)" stroke="#8c8c8c" stroke-width="0.55"/>
<rect x="1570.5" y="434.0" width="27.3" height="18.2" fill="rgba(255,255,255,0.3)" stroke="#8c8c8c" stroke-width="0.55"/>
<rect x="1570.5" y="456.8" width="27.3" height="18.2" fill="rgba(255,255,255,0.3)" stroke="#8c8c8c" stroke-width="0.55"/>
<g fill="none" stroke="#9a9a9a" stroke-width="0.9" stroke-linecap="round"><circle cx="1583" cy="305.3" r="5"/><path d="M1586.8 309.1 l3.6 3.5" stroke-width="1.4"/><path d="M1580.8 305.3 h4.4 M1583 303.1 v4.4" stroke-width="0.7"/></g>
<g fill="none" stroke="#9a9a9a" stroke-width="0.9" stroke-linecap="round"><circle cx="1583" cy="327.8" r="5"/><path d="M1586.8 331.6 l3.6 3.5" stroke-width="1.4"/><path d="M1580.8 327.8 h4.4" stroke-width="0.7"/></g>
<g fill="none" stroke="#9a9a9a" stroke-width="0.9" stroke-linecap="round"><path d="M1577.5 352.3 h14.3 M1584.3 345.3 v13.8" stroke-width="0.8"/><path d="M1579.6 350.2 l-2.1 2.1 l2.1 2.1 M1589.7 350.2 l2.1 2.1 l-2.1 2.1 M1582.2 347.4 l2.1-2.1 l2.1 2.1 M1582.2 357.1 l2.1 2.1 l2.1-2.1" stroke-width="1.1"/></g>
<path d="M1580.6 376.6 l4-3.6 l4 3.6" fill="none" stroke="#8a8a8a" stroke-width="1.7" stroke-linecap="round" stroke-linejoin="round"/>
<path d="M1586.7 393.4 l-3.6 4 l3.6 4" fill="none" stroke="#8a8a8a" stroke-width="1.7" stroke-linecap="round" stroke-linejoin="round"/>
<path d="M1580.6 417.8 l4 3.6 l4-3.6" fill="none" stroke="#8a8a8a" stroke-width="1.7" stroke-linecap="round" stroke-linejoin="round"/>
<path d="M1582.5 437.8 l3.6 4 l-3.6 4" fill="none" stroke="#8a8a8a" stroke-width="1.7" stroke-linecap="round" stroke-linejoin="round"/>
<path d="M1580.5 465.5 v-2.3 a3.2 3.2 0 0 1 6.4 0 v2.3" fill="none" stroke="#8e8e8e" stroke-width="1.5"/>
<rect x="1578" y="465.3" width="11.5" height="7.2" rx="0.8" fill="#9a9a9a"/><circle cx="1583.7" cy="468.9" r="1.4" fill="#fff"/>
<path d="M1586 334.5 L1586 451.4" stroke="#555" stroke-width="0.5"/>
</svg>
</body></html>
